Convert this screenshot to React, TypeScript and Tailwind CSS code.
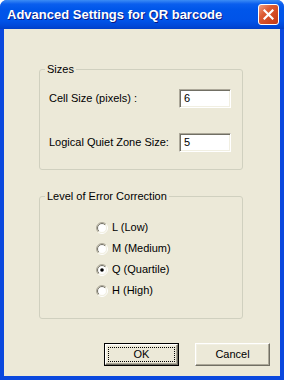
import React from "react";

function CloseGlyph() {
    return (
        <svg width="11" height="11" viewBox="0 0 11 11">
            <path d="M1.5 1.5 L9.5 9.5 M9.5 1.5 L1.5 9.5" stroke="#fff" strokeWidth="2.2" strokeLinecap="square" />
        </svg>
    );
}

function Radio({ id, checked }: { id: string; checked?: boolean }) {
    return (
        <svg width="12" height="12" viewBox="0 0 12 12" className="shrink-0">
            <defs>
                <linearGradient id={`${id}-o`} x1="0" y1="0" x2="1" y2="1">
                    <stop offset="0.5" stopColor="#ACA899" />
                    <stop offset="0.5" stopColor="#FFFFFF" />
                </linearGradient>
                <linearGradient id={`${id}-i`} x1="0" y1="0" x2="1" y2="1">
                    <stop offset="0.5" stopColor="#716F64" />
                    <stop offset="0.5" stopColor="#F1EFE2" />
                </linearGradient>
            </defs>
            <circle cx="6" cy="6" r="5.5" fill="none" stroke={`url(#${id}-o)`} />
            <circle cx="6" cy="6" r="4.5" fill="#fff" stroke={`url(#${id}-i)`} />
            {checked && <circle cx="6" cy="6" r="1.8" fill="#000" />}
        </svg>
    );
}

function Field({ label, value }: { label: string; value: string }) {
    return (
        <div className="flex items-center">
            <span className="w-[130px]">{label}</span>
            <div className="flex h-[19px] w-[52px] items-center border border-t-[#ACA899] border-l-[#ACA899] border-b-white border-r-white bg-white px-[4px] shadow-[inset_1px_1px_0_#716F64,inset_-1px_-1px_0_#F1EFE2]">
                {value}
            </div>
        </div>
    );
}

const levels = [
    { key: "l", label: "L (Low)" },
    { key: "m", label: "M (Medium)" },
    { key: "q", label: "Q (Quartile)", checked: true },
    { key: "h", label: "H (High)" },
];

const raised =
    "border border-t-white border-l-white border-b-[#716F64] border-r-[#716F64] bg-[#ECE9D8] shadow-[inset_-1px_-1px_0_#ACA899,inset_1px_1px_0_#F1EFE2]";

export default function App() {
    return (
        <div className="flex h-[380px] w-[284px] flex-col overflow-hidden rounded-t-[7px] bg-[#0A48DE] font-['Liberation_Sans',Arial,sans-serif] text-[11px] leading-[13px] text-black">
            <div className="flex h-[29px] shrink-0 items-center justify-between bg-[linear-gradient(to_bottom,#3C8CF5_0%,#0A5EEE_14%,#0056EA_32%,#0053E8_72%,#0048D8_90%,#003FC8_100%)] pl-[7px] pr-[5px]">
                <span className="text-[13px] font-bold leading-[16px] text-white [text-shadow:1px_1px_0_#0A1883]">
                    Advanced Settings for QR barcode
                </span>
                <div className="flex h-[21px] w-[21px] items-center justify-center rounded-[3px] border border-white bg-[linear-gradient(135deg,#F0A084_0%,#DD5B33_35%,#CF4620_70%,#C03A18_100%)]">
                    <CloseGlyph />
                </div>
            </div>

            <div className="mx-[4px] mb-[4px] flex flex-1 flex-col bg-[#ECE9D8]">
                <fieldset className="ml-[35px] mt-[34px] w-[204px] rounded-[3px] border border-[#D0D0BF]">
                    <legend className="ml-[5px] px-[2px]">Sizes</legend>
                    <div className="flex flex-col gap-[25px] pb-[17px] pl-[9px] pt-[13px]">
                        <Field label="Cell Size (pixels) :" value="6" />
                        <Field label="Logical Quiet Zone Size:" value="5" />
                    </div>
                </fieldset>

                <fieldset className="ml-[35px] mt-[20px] w-[204px] rounded-[3px] border border-[#D0D0BF]">
                    <legend className="ml-[5px] px-[2px]">Level of Error Correction</legend>
                    <div className="flex flex-col pb-[17px] pl-[56px] pt-[14px]">
                        {levels.map((lv) => (
                            <div key={lv.key} className="flex h-[21px] items-center gap-[4px]">
                                <Radio id={`r-${lv.key}`} checked={lv.checked} />
                                <span>{lv.label}</span>
                            </div>
                        ))}
                    </div>
                </fieldset>

                <div className="mt-[24px] flex justify-end gap-[16px] pr-[10px]">
                    <div className="flex h-[23px] w-[75px] border border-black">
                        <div className={`flex flex-1 p-[2px] ${raised}`}>
                            <div className="flex flex-1 items-center justify-center border border-dotted border-black">OK</div>
                        </div>
                    </div>
                    <div className={`flex h-[23px] w-[75px] items-center justify-center ${raised}`}>Cancel</div>
                </div>
            </div>
        </div>
    );
}
